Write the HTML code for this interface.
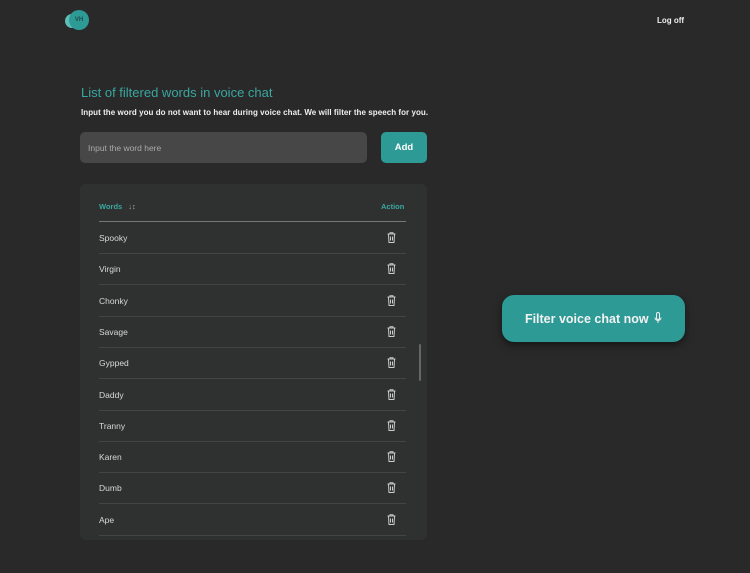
<!DOCTYPE html><html><head><style>
body{margin:0;width:750px;height:573px;background:#292929;font-family:"Liberation Sans",sans-serif;position:relative;overflow:hidden;color:#ddd}
.a{position:absolute}
.row{position:absolute;left:99px;width:307px;height:31px;border-bottom:1px solid #444;font-size:8.5px;color:#d8d8d8}
.row span{position:absolute;left:0;top:11px}
.row svg{position:absolute;left:288px;top:10px}
</style></head><body>
<div class="a" style="left:65px;top:14px;width:14px;height:14px;border-radius:50%;background:#5fbdb7"></div>
<div class="a" style="left:69px;top:10px;width:20px;height:20px;border-radius:50%;background:#2e9a96;font-size:6px;font-weight:bold;color:#1c4b49;text-align:center;line-height:20px">VH</div>
<div class="a" style="left:657px;top:16px;font-size:8px;font-weight:bold;color:#eee">Log off</div>
<div class="a" style="left:81px;top:85px;font-size:13px;color:#3aa7a1">List of filtered words in voice chat</div>
<div class="a" style="left:81px;top:108px;font-size:8px;font-weight:bold;color:#eee;letter-spacing:0.05px">Input the word you do not want to hear during voice chat. We will filter the speech for you.</div>
<div class="a" style="left:80px;top:132px;width:287px;height:31px;border-radius:5px;background:#474747;font-size:8.5px;color:#aaa"><span style="position:absolute;left:8px;top:11px">Input the word here</span></div>
<div class="a" style="left:381px;top:132px;width:46px;height:31px;border-radius:5px;background:#2e9a96;font-size:9.5px;font-weight:bold;color:#fff;text-align:center;line-height:31px">Add</div>
<div class="a" style="left:80px;top:184px;width:347px;height:356px;border-radius:6px;background:#2f3030"></div>
<div class="a" style="left:99px;top:202px;font-size:7.5px;font-weight:bold;color:#3aa7a1">Words <span style="color:#aaa;margin-left:4px">↓↕</span></div>
<div class="a" style="left:381px;top:202px;font-size:7.5px;font-weight:bold;color:#3aa7a1">Action</div>
<div class="a" style="left:99px;top:221px;width:307px;height:1px;background:#777"></div>
<div class="a" style="left:419px;top:344px;width:2px;height:37px;background:#666;border-radius:1px"></div>
<div id="rows"></div>
<div class="a" style="left:502px;top:295px;width:183px;height:47px;border-radius:12px;background:#2e9a96;box-shadow:0 3px 8px rgba(0,0,0,.5);color:#f2f2f2;font-size:12.5px;font-weight:bold;text-align:center;line-height:48px">Filter voice chat now <svg width="8" height="12" viewBox="0 0 8 12" style="vertical-align:-1px;margin-left:2px"><rect x="2.5" y="0.5" width="3" height="7" rx="1.5" fill="none" stroke="#eee" stroke-width="1"/><path d="M1 5.5a3 3 0 0 0 6 0M4 8.5v2.5" fill="none" stroke="#eee" stroke-width="1"/></svg></div>
<script>
var w=["Spooky","Virgin","Chonky","Savage","Gypped","Daddy","Tranny","Karen","Dumb","Ape"],h="";
w.forEach(function(t,i){var y=222+i*31.3;h+='<div class="row" style="top:'+y+'px"><span>'+t+'</span><svg width="9" height="11" viewBox="0 0 9 11"><path d="M0.5 2h8M3 2V0.8h3V2M1.5 2.5l.5 8h5l.5-8M3.5 4.5v4M5.5 4.5v4" fill="none" stroke="#ccc" stroke-width="1"/></svg></div>'});
document.getElementById("rows").innerHTML=h;
</script>
</body></html>
